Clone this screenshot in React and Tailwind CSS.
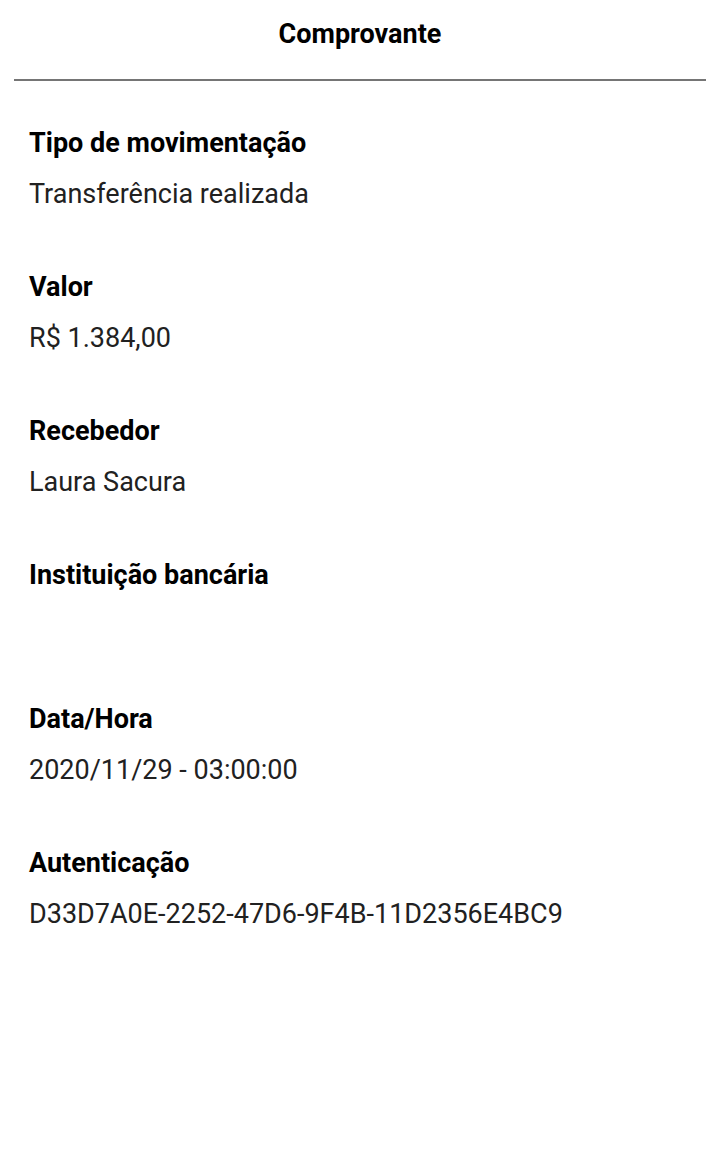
export default function App() {
  const items = [
    ["Tipo de movimentação", "Transferência realizada"],
    ["Valor", "R$ 1.384,00"],
    ["Recebedor", "Laura Sacura"],
    ["Instituição bancária", ""],
    ["Data/Hora", "2020/11/29 - 03:00:00"],
    ["Autenticação", "D33D7A0E-2252-47D6-9F4B-11D2356E4BC9"],
  ];
  return (
    <div className="w-[720px] h-[1158px] bg-white" style={{ fontFamily: "Roboto, 'Noto Sans', sans-serif" }}>
      <div className="mx-[14px] pt-[18px] pb-[29px] border-b-2 border-[#757575] text-center">
        <div className="text-[27px] leading-[32px] font-bold text-black">Comprovante</div>
      </div>
      <div className="px-[29px] pt-[46px] flex flex-col gap-[61px]">
        {items.map(([label, value]) => (
          <div key={label} className="flex flex-col gap-[19px]">
            <div className="text-[27px] leading-[32px] font-bold text-black">{label}</div>
            <div className="text-[27px] leading-[32px] h-[32px] text-[#212121]">{value}</div>
          </div>
        ))}
      </div>
    </div>
  );
}
